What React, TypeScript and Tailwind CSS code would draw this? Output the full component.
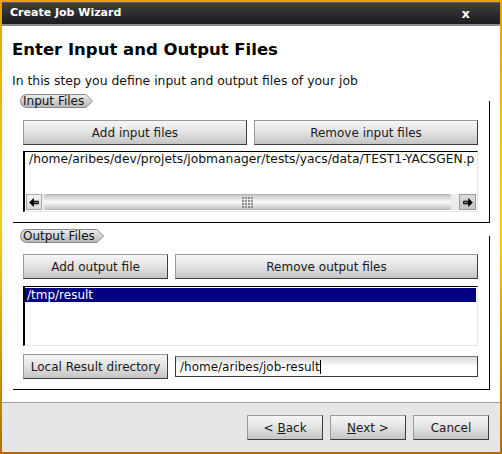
import React from "react";

const font = { fontFamily: '"DejaVu Sans", "Liberation Sans", sans-serif' };

function Btn({ children, className = "" }: { children: React.ReactNode; className?: string }) {
  return (
    <button
      className={`h-[25px] flex items-center justify-center text-[12px] text-[#1a1a1a] bg-gradient-to-b from-[#f6f6f6] via-[#e2e2e2] to-[#c4c4c4] border border-[#9a9a9a] border-r-[#3c3c3c] border-b-[#3c3c3c] ${className}`}
    >
      {children}
    </button>
  );
}

function GroupLabel({ text, id }: { text: string; id: string }) {
  return (
    <div className="absolute -top-[7px] left-[7px] flex h-[14px] items-stretch">
      <div className="flex items-center pl-[2px] pr-[1px] text-[12px] leading-none text-[#111] rounded-l-[7px] border-l border-y border-[#8a8a8a] bg-gradient-to-b from-[#ececec] to-[#b8b8b8]">
        {text}
      </div>
      <svg width="8" height="14" viewBox="0 0 8 14" className="block">
        <defs>
          <linearGradient id={id} x1="0" y1="0" x2="0" y2="1">
            <stop offset="0" stopColor="#ececec" />
            <stop offset="1" stopColor="#b8b8b8" />
          </linearGradient>
        </defs>
        <path d="M0 0.5 H1 L7.5 7 L1 13.5 H0" fill={`url(#${id})`} stroke="#8a8a8a" strokeWidth="1" />
      </svg>
    </div>
  );
}

function Arrow({ dir }: { dir: "left" | "right" }) {
  return (
    <svg width="10" height="9" viewBox="0 0 10 9" className={dir === "right" ? "rotate-180" : ""}>
      <path d="M0.5 4.5 L4.5 0.5 V3 H9.5 V6 H4.5 V8.5 Z" fill="#000" stroke="#000" strokeWidth="0.6" />
      <path d="M5.2 3.8 H9 V5.2 H5.2" fill="#fff" opacity="0.5" />
    </svg>
  );
}

function ScrollBar() {
  return (
    <div className="flex h-[16px] items-stretch mx-[1px] mb-[1px]">
      <div className="w-[16px] flex items-center justify-center bg-gradient-to-b from-[#f4f4f4] to-[#d8d8d8] border border-[#a8a8a8]">
        <Arrow dir="left" />
      </div>
      <div className="flex-1 flex items-stretch bg-[#ececec] pl-[2px]">
        <div className="flex-1 relative flex items-center justify-center rounded-[3px] border-y border-[#b4b4b4] bg-gradient-to-b from-[#c8c8c8] via-[#fbfbfb] to-[#c4c4c4]">
          <div className="grid grid-cols-4 gap-[1px]">
            {Array.from({ length: 16 }).map((_, i) => (
              <div key={i} className="w-[2px] h-[2px] bg-[#8c8c8c]" />
            ))}
          </div>
        </div>
        <div className="w-[8px]" />
      </div>
      <div className="w-[17px] flex items-center justify-center bg-gradient-to-b from-[#dcdcdc] to-[#c4c4c4] border border-[#9a9a9a]">
        <Arrow dir="right" />
      </div>
    </div>
  );
}

export default function App() {
  return (
    <div
      className="w-[502px] h-[454px] p-[2px] bg-gradient-to-b from-[#eba200] via-[#f6cf10] to-[#b86a00]"
      style={font}
    >
      <div className="flex h-full flex-col bg-white">
        {/* Title bar */}
        <div className="h-[24px] flex items-center justify-between pl-[8px] pr-[30px] bg-gradient-to-b from-[#404044] to-[#1c1c20] border-t border-[#5c5c5c] border-b-2 border-b-[#8a8a8a]">
          <span className="text-white text-[11px] font-bold">Create Job Wizard</span>
          <span className="text-white text-[13px] font-bold leading-none">x</span>
        </div>

        {/* Page */}
        <div className="flex-1 flex flex-col">
          <h1 className="pl-[10px] pt-[13px] text-[16.5px] leading-[22px] font-bold text-black">
            Enter Input and Output Files
          </h1>
          <p className="pl-[10px] mt-[12px] text-[12.4px] leading-[16px] text-[#111]">
            In this step you define input and output files of your job
          </p>

          {/* Input Files */}
          <div className="relative ml-[11px] mt-[12px] w-[477px] border-r border-b border-black pl-[10px] pr-[11px] pt-[19px] pb-[10px]">
            <GroupLabel text="Input Files" id="lblIn" />
            <div className="flex gap-[7px]">
              <Btn className="flex-1">Add input files</Btn>
              <Btn className="flex-1">Remove input files</Btn>
            </div>
            <div className="mt-[6px] h-[61px] flex flex-col border-t border-l-2 border-black border-r border-r-[#e6e6e6] border-b border-b-[#e6e6e6]">
              <div className="flex-1 pl-[4px] text-[12.3px] leading-[15px] text-[#111] whitespace-nowrap overflow-hidden">
                /home/aribes/dev/projets/jobmanager/tests/yacs/data/TEST1-YACSGEN.p
              </div>
              <ScrollBar />
            </div>
          </div>

          {/* Output Files */}
          <div className="relative ml-[11px] mt-[13px] w-[477px] border-r border-b border-black pl-[10px] pr-[11px] pt-[18px] pb-[10px]">
            <GroupLabel text="Output Files" id="lblOut" />
            <div className="flex gap-[7px]">
              <Btn className="w-[145px]">Add output file</Btn>
              <Btn className="flex-1">Remove output files</Btn>
            </div>
            <div className="mt-[7px] h-[60px] border-t border-l-2 border-black border-r border-r-[#e6e6e6] border-b border-b-[#e6e6e6] pt-[1px] pr-[1px]">
              <div className="h-[14px] bg-[#000080] text-white text-[12px] leading-[14px] pl-[2px]">/tmp/result</div>
            </div>
            <div className="mt-[8px] flex items-center gap-[7px]">
              <Btn className="w-[145px]">Local Result directory</Btn>
              <div className="flex-1 h-[21px] flex items-center pl-[4px] text-[12px] text-[#111] border border-[#3c3c3c] border-t-[#7a7a7a] bg-gradient-to-b from-[#d8d8d8] via-white to-white">
                /home/aribes/job-result<span className="inline-block w-[1px] h-[14px] bg-black" />
              </div>
            </div>
          </div>
        </div>

        {/* Footer */}
        <div className="h-[50px] flex items-center justify-end gap-[7px] pr-[11px] bg-[#e6e6e6] border-t border-[#a0a0a0]">
          <Btn className="w-[76px]">
            &lt; <span className="underline ml-[4px]">B</span>ack
          </Btn>
          <Btn className="w-[76px]">
            <span className="underline">N</span>ext &gt;
          </Btn>
          <Btn className="w-[76px]">Cancel</Btn>
        </div>
      </div>
    </div>
  );
}
